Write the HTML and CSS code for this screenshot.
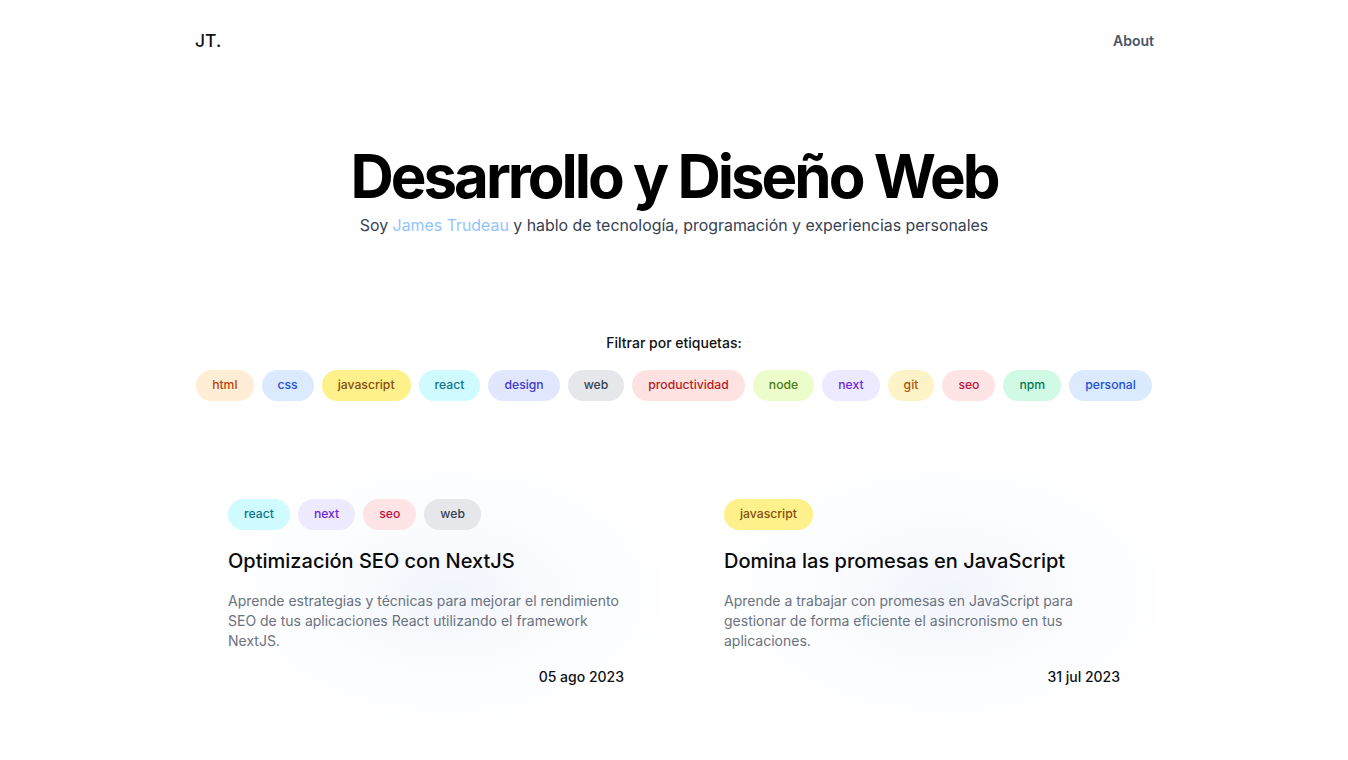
FILE: index.html
```html
<!DOCTYPE html>
<html lang="es">
<head>
<meta charset="utf-8">
<title>JT. Blog</title>
<link rel="stylesheet" href="styles.css">
</head>
<body>
<div class="container">
  <header class="header">
    <a class="logo" href="#">JT.</a>
    <nav><a class="nav-link" href="#">About</a></nav>
  </header>

  <section class="hero">
    <h1 class="hero-title">Desarrollo y Diseño Web</h1>
    <p class="hero-sub">Soy <span class="name">James Trudeau</span> y hablo de tecnología, programación y experiencias personales</p>
  </section>

  <section class="filter">
    <p class="filter-label">Filtrar por etiquetas:</p>
    <div class="tags tags-center">
      <span class="tag t-html">html</span>
      <span class="tag t-css">css</span>
      <span class="tag t-js">javascript</span>
      <span class="tag t-react">react</span>
      <span class="tag t-design">design</span>
      <span class="tag t-web">web</span>
      <span class="tag t-prod">productividad</span>
      <span class="tag t-node">node</span>
      <span class="tag t-next">next</span>
      <span class="tag t-git">git</span>
      <span class="tag t-seo">seo</span>
      <span class="tag t-npm">npm</span>
      <span class="tag t-personal">personal</span>
    </div>
  </section>

  <section class="posts">
    <article class="card">
      <div class="tags">
        <span class="tag t-react">react</span>
        <span class="tag t-next">next</span>
        <span class="tag t-seo">seo</span>
        <span class="tag t-web">web</span>
      </div>
      <h2 class="card-title">Optimización SEO con NextJS</h2>
      <p class="card-desc">Aprende estrategias y técnicas para mejorar el rendimiento SEO de tus aplicaciones React utilizando el framework NextJS.</p>
      <p class="card-date">05 ago 2023</p>
    </article>
    <article class="card">
      <div class="tags">
        <span class="tag t-js">javascript</span>
      </div>
      <h2 class="card-title">Domina las promesas en JavaScript</h2>
      <p class="card-desc">Aprende a trabajar con promesas en JavaScript para gestionar de forma eficiente el asincronismo en tus aplicaciones.</p>
      <p class="card-date">31 jul 2023</p>
    </article>
  </section>
</div>
</body>
</html>
```

FILE: styles.css
```css
* { box-sizing: border-box; }
html, body { margin: 0; padding: 0; background: #fff; }
body {
  font-family: Inter, "Noto Sans", sans-serif;
  color: #0a0a0a;
  overflow: hidden;
}
a { text-decoration: none; color: inherit; }

.container {
  max-width: 960px;
  margin: 0 auto;
}

.header {
  display: flex;
  justify-content: space-between;
  align-items: center;
  height: 80px;
}
.logo { font-size: 17.5px; font-weight: 500; color: #111; margin-left: 1px; }
.nav-link { font-size: 14px; font-weight: 600; color: #475569; }

.hero {
  text-align: center;
  padding-top: 59px;
}
.hero-title {
  margin: 0;
  font-size: 60px;
  line-height: 74px;
  font-weight: 700;
  letter-spacing: -0.05em;
  color: #000;
}
.hero-sub {
  margin: 0;
  padding-top: 1px;
  font-size: 15.9px;
  line-height: 24px;
  color: #374151;
}
.name { color: #93c5fd; }

.filter {
  padding-top: 95px;
  text-align: center;
}
.filter-label {
  margin: 0 0 17px;
  font-size: 14px;
  font-weight: 500;
  color: #111;
  line-height: 20px;
}

.tags {
  display: flex;
  flex-wrap: wrap;
  gap: 8px;
}
.tags-center { justify-content: center; }

.tag {
  display: inline-flex;
  align-items: center;
  height: 31px;
  padding: 0 16px;
  border-radius: 999px;
  font-size: 12.2px;
  font-weight: 500;
  line-height: 1;
}
.t-html { background: #ffedd5; color: #c2410c; }
.t-css { background: #dbeafe; color: #1d4ed8; }
.t-js { background: #fef08a; color: #854d0e; }
.t-react { background: #cffafe; color: #0e7490; }
.t-design { background: #e0e7ff; color: #4338ca; }
.t-web { background: #e5e7eb; color: #374151; }
.t-prod { background: #fee2e2; color: #b91c1c; }
.t-node { background: #ecfccb; color: #4d7c0f; }
.t-next { background: #ede9fe; color: #6d28d9; }
.t-git { background: #fef3c7; color: #b45309; }
.t-seo { background: #ffe4e6; color: #be123c; }
.t-npm { background: #d1fae5; color: #047857; }
.t-personal { background: #dbeafe; color: #1d4ed8; }

.posts {
  display: grid;
  grid-template-columns: 1fr 1fr;
  gap: 32px;
  margin-top: 64px;
}
.card {
  padding: 34px;
  background: radial-gradient(ellipse 55% 60% at 55% 50%, rgba(226,234,248,0.5) 0%, rgba(240,244,252,0.3) 45%, rgba(255,255,255,0) 100%);
}
.card-title {
  margin: 17px 0 0;
  font-size: 20px;
  line-height: 28px;
  font-weight: 500;
  color: #0a0a0a;
}
.card-desc {
  margin: 16px 0 0;
  font-size: 14px;
  line-height: 20px;
  color: #6b7280;
}
.card-date {
  margin: 16px 0 0;
  text-align: right;
  font-size: 14px;
  font-weight: 500;
  line-height: 20px;
  color: #111;
}
```
